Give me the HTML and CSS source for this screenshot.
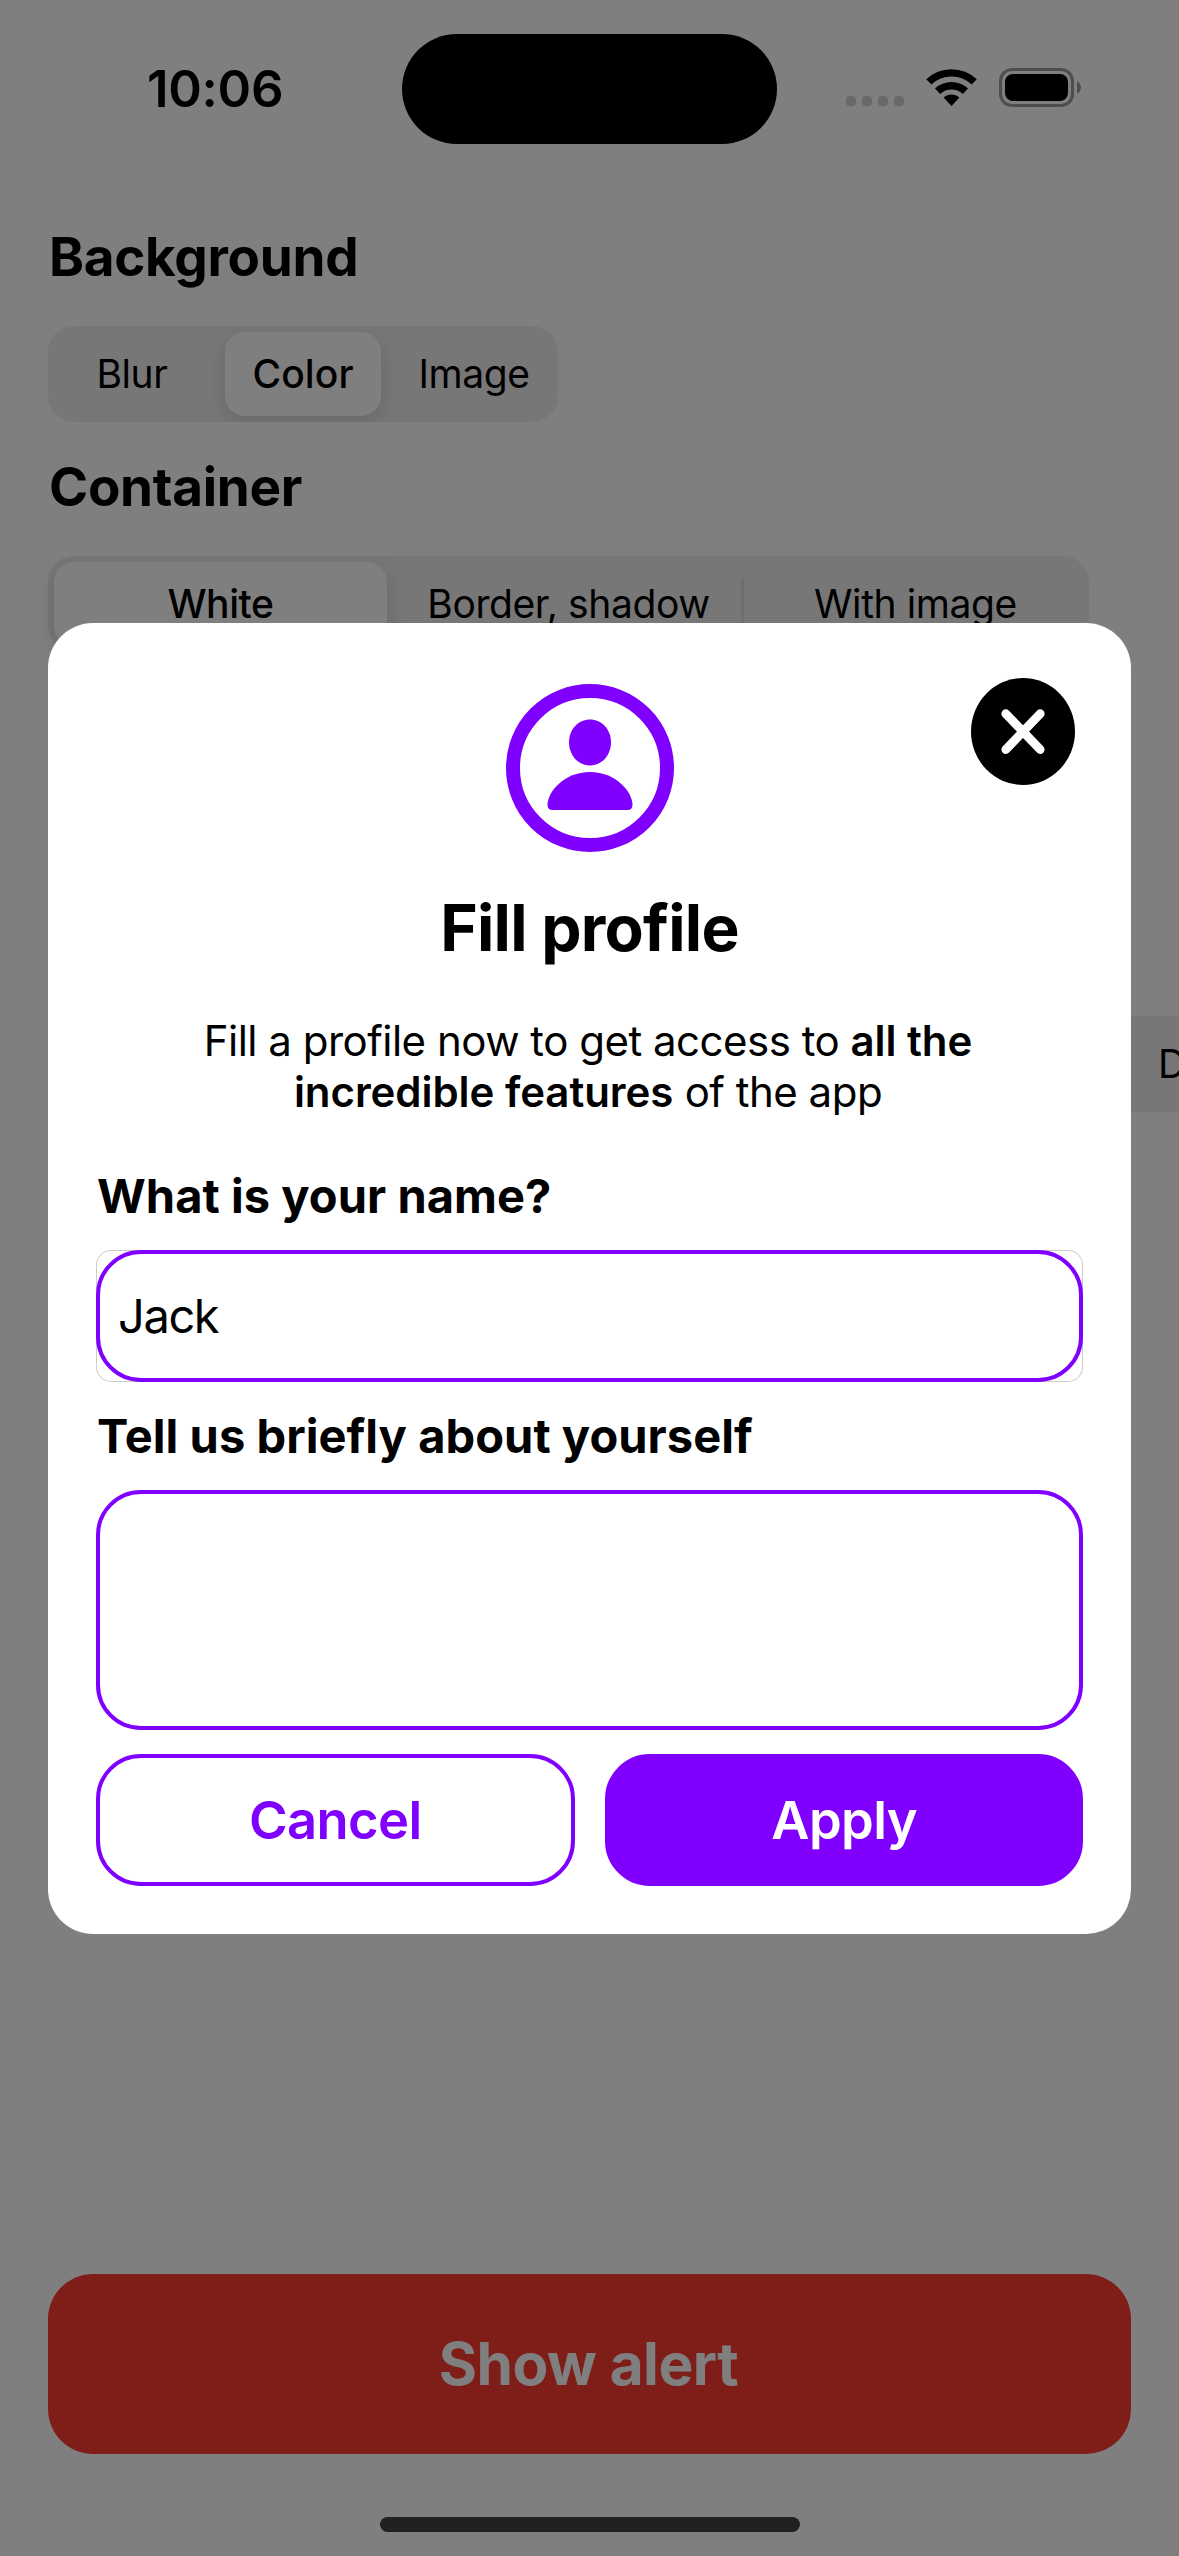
FILE: index.html
```html
<!DOCTYPE html>
<html lang="en">
<head>
  <meta charset="utf-8">
  <title>Fill profile</title>
  <link rel="stylesheet" href="styles.css">
</head>
<body>
  <main class="screen">
    <header class="status">
      <span class="status-time">10:06</span>
      <span class="island"></span>
      <span class="status-icons">
        <span class="dots"><i></i><i></i><i></i><i></i></span>
        <svg class="wifi" width="53" height="40" viewBox="0 0 53 40" fill="none" stroke="#000">
          <path d="M3.8 14.9A33.1 33.1 0 0 1 49.2 14.9" stroke-width="7.4"/>
          <path d="M12.6 24.2A20.3 20.3 0 0 1 40.4 24.2" stroke-width="7.5"/>
          <path d="M26.5 39L18.6 30.6A11.5 11.5 0 0 1 34.4 30.6Z" fill="#000" stroke="none"/>
        </svg>
        <svg class="battery" width="82" height="39" viewBox="0 0 82 39">
          <rect x="1.5" y="1.5" width="72" height="36" rx="11.5" fill="none" stroke="#9c9c9c" stroke-width="3"/>
          <rect x="6" y="6" width="63" height="27" rx="8" fill="#000"/>
          <path d="M78 13.5C83.3 15.5 83.3 23.5 78 25.5Z" fill="#9c9c9c"/>
        </svg>
      </span>
    </header>

    <section class="options">
      <h2 class="heading">Background</h2>
      <div class="segments segments-small">
        <span class="segment">Blur</span>
        <span class="segment selected">Color</span>
        <span class="segment">Image</span>
      </div>
      <h2 class="heading heading-next">Container</h2>
      <div class="segments segments-wide">
        <span class="segment selected">White</span>
        <span class="segment">Border, shadow</span>
        <span class="segment divided">With image</span>
      </div>
      <div class="segments segments-scroll"><span>D</span></div>
    </section>

    <footer class="footer">
      <button class="show-alert">Show alert</button>
      <span class="home-indicator"></span>
    </footer>
  </main>

  <div class="backdrop">
    <section class="dialog">
      <button class="close" aria-label="Close">
        <svg width="104" height="107" viewBox="0 0 104 107" fill="none">
          <ellipse cx="52" cy="53.5" rx="52" ry="53.5" fill="#000"/>
          <path d="M34.8 35.7L69.2 71.5M69.2 35.7L34.8 71.5" stroke="#fff" stroke-width="8.8" stroke-linecap="round"/>
        </svg>
      </button>
      <svg class="avatar" width="168" height="168" viewBox="0 0 168 168" fill="#8000ff">
        <circle cx="84" cy="84" r="77" fill="none" stroke="#8000ff" stroke-width="14"/>
        <path d="M84 35.5C95.500 35.500 105 45 105 58.500C105 71.500 95.500 81.500 84 81.500C72.500 81.500 63 71.500 63 58.500C63 45 72.500 35.500 84 35.500Z"/>
        <path d="M84 88C110 88 126.500 108 126.500 121Q126.500 126 121.500 126H46.500Q41.500 126 41.500 121C41.500 108 58 88 84 88Z"/>
      </svg>
      <h1 class="title">Fill profile</h1>
      <p class="message">Fill a profile now to get access to <b>all the</b><br><b>incredible features</b> of the app</p>
      <label class="label">What is your name?</label>
      <div class="field-frame"><div class="field">Jack</div></div>
      <label class="label">Tell us briefly about yourself</label>
      <div class="field field-tall"></div>
      <div class="actions">
        <button class="action">Cancel</button>
        <button class="action primary">Apply</button>
      </div>
    </section>
  </div>
</body>
</html>
```
FILE: styles.css
```css
* {
  box-sizing: border-box;
}

body {
  position: relative;
  width: 1179px;
  height: 2556px;
  margin: 0;
  overflow: hidden;
  background: #fff;
  color: #000;
  font-family: Inter, "Liberation Sans", sans-serif;
}

button {
  padding: 0;
  border: 0;
  background: none;
  font-family: inherit;
}

.screen {
  display: flex;
  flex-direction: column;
  height: 100%;
}

/* Status bar */
.status {
  display: grid;
  grid-template-columns: 402px 375px 1fr;
  height: 177px;
  padding-top: 33.5px;
}

.status-time {
  padding-left: 147px;
  font-size: 51px;
  font-weight: 600;
  line-height: 109px;
  letter-spacing: -0.3px;
}

.island {
  height: 110.5px;
  border-radius: 56px;
  background: #000;
}

.status-icons {
  display: flex;
  align-items: flex-start;
  padding: 34.5px 0 0 69px;
}

.dots {
  display: flex;
  gap: 6px;
  margin-top: 28px;
}

.dots i {
  width: 10px;
  height: 10px;
  border-radius: 3.5px;
  background: #d2d2d2;
}

.wifi {
  margin: -1px 21px 0;
}

/* Options behind the dialog */
.options {
  padding: 44px 0 0 48px;
}

.heading {
  margin: 0 0 33px 1px;
  font-size: 53px;
  font-weight: 700;
  line-height: 72px;
  letter-spacing: -0.3px;
}

.heading-next {
  margin-top: 29px;
}

.segments {
  display: grid;
  grid-template-columns: repeat(3, 1fr);
  height: 96px;
  border-radius: 26px;
  background: #eeeeef;
  font-size: 39px;
  line-height: 84px;
  letter-spacing: -0.4px;
  text-align: center;
}

.segments-small {
  width: 510px;
  overflow: hidden;
}

.segments-small .selected {
  letter-spacing: 0.1px;
}

.segment {
  margin: 6px 7px;
}

.segments-small .segment:first-child {
  margin-right: 9px;
}

.segments-small .segment:last-child {
  margin-right: 5px;
}

.segments-wide {
  width: 1041px;
}

.segment.selected {
  border-radius: 20px;
  background: #fff;
  box-shadow: 0 8px 22px rgba(0, 0, 0, 0.13);
  font-weight: 500;
}

.segments-wide .selected {
  margin-right: 8px;
  margin-left: 6px;
}

.divided {
  position: relative;
}

.divided::before {
  content: "";
  position: absolute;
  top: 15px;
  bottom: 15px;
  left: -8px;
  width: 3px;
  border-radius: 2px;
  background: #dddddf;
}

.segments-scroll {
  display: block;
  width: 1131px;
  margin-top: 364px;
  padding: 6px 0 0 1110px;
  border-radius: 26px 0 0 26px;
  overflow: hidden;
  text-align: left;
}

/* Bottom area */
.footer {
  display: flex;
  flex-direction: column;
  align-items: center;
  margin-top: auto;
  padding: 0 48px 24px;
}

.show-alert {
  width: 100%;
  height: 180px;
  padding: 0 2px 2px 0;
  border-radius: 45px;
  background: #ff3b30;
  color: #fff;
  font-size: 58.5px;
  font-weight: 700;
  letter-spacing: -0.5px;
}

.home-indicator {
  width: 420px;
  height: 15px;
  margin-top: 63px;
  border-radius: 8px;
  background: #424242;
}

/* Dialog */
.backdrop {
  position: absolute;
  inset: 0;
  display: flex;
  align-items: center;
  justify-content: center;
  background: rgba(0, 0, 0, 0.5);
}

.dialog {
  position: relative;
  width: 1083px;
  height: 1311px;
  padding: 61px 48px 48px;
  border-radius: 45px;
  background: #fff;
}

.close {
  position: absolute;
  top: 55px;
  right: 56px;
  width: 104px;
  height: 107px;
}

.close svg,
.avatar {
  display: block;
}

.avatar {
  margin: 0 auto;
}

.title {
  margin: 37px 0 0;
  font-size: 64px;
  font-weight: 700;
  line-height: 78px;
  letter-spacing: -0.75px;
  text-align: center;
}

.message {
  margin: 48px 0 50px;
  padding-right: 3px;
  font-size: 42px;
  line-height: 51px;
  letter-spacing: -0.5px;
  text-align: center;
}

.message b {
  font-weight: 600;
  letter-spacing: -0.05px;
}

.label {
  display: block;
  margin: 25px 0;
  padding-left: 1px;
  font-size: 47px;
  font-weight: 700;
  line-height: 58px;
  letter-spacing: 0.06px;
}

/* Thin system frame that shows at the corners of the text field */
.field-frame {
  border-radius: 15px;
  box-shadow: inset 0 0 0 1px #ccc;
}

.field {
  height: 132px;
  padding-left: 18px;
  border: 4px solid #8000ff;
  border-radius: 45px;
  font-size: 47px;
  line-height: 124px;
  letter-spacing: -1.4px;
}

.field-tall {
  height: 240px;
}

.actions {
  display: grid;
  grid-template-columns: 1fr 1fr;
  gap: 30px;
  margin-top: 24px;
}

.action {
  height: 132px;
  border: 4px solid #8000ff;
  border-radius: 45px;
  color: #8000ff;
  font-size: 52.5px;
  font-weight: 600;
  letter-spacing: -0.6px;
}

.action.primary {
  padding-left: 1px;
  background: #8000ff;
  color: #fff;
}
```
